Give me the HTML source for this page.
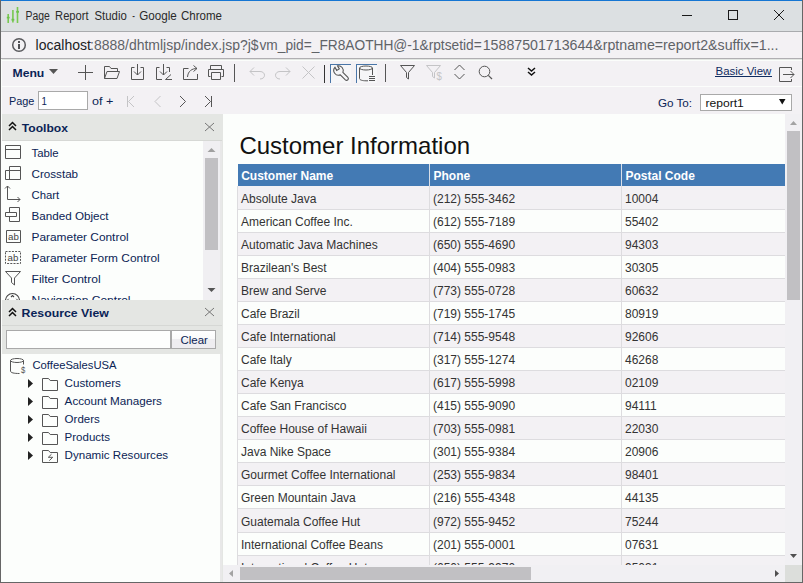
<!DOCTYPE html>
<html><head><meta charset="utf-8"><style>
html,body{margin:0;padding:0;width:803px;height:583px;overflow:hidden;background:#f3f1f4}
svg{display:block;font-family:"Liberation Sans",sans-serif}
</style></head><body>
<svg width="803" height="583" viewBox="0 0 803 583">
<defs>
<clipPath id="ctb"><rect x="1" y="141" width="202" height="159"/></clipPath>
<clipPath id="crep"><rect x="223" y="114" width="562" height="451"/></clipPath>
</defs>
<rect x="0" y="0" width="803" height="583" fill="#f3f1f4" />
<rect x="1" y="1" width="801" height="30" fill="#dce0e2" />
<rect x="1" y="31" width="801" height="1" fill="#a9abae" />
<rect x="1" y="32" width="801" height="26" fill="#f3f1f4" />
<rect x="1" y="58" width="801" height="1" fill="#b0aeb2" />
<rect x="1" y="59" width="801" height="1" fill="#e2e6e2" />
<rect x="1" y="60" width="801" height="1" fill="#fbfdfb" />
<path d="M8.2 14 V23 M12.9 10 V22.5 M17.5 7 V23" stroke="#78c850" stroke-width="1.6" fill="none" />
<rect x="6.8" y="16.8" width="2.8" height="1.6" fill="#6cc24a" />
<rect x="11.5" y="18.8" width="2.8" height="1.8" fill="#6cc24a" />
<rect x="16.2" y="10.9" width="2.8" height="1.8" fill="#6cc24a" />
<text x="25.50" y="20" font-size="12.5" fill="#2a2a2a" textLength="24.35" lengthAdjust="spacingAndGlyphs" >Page</text>
<text x="55.10" y="20" font-size="12.5" fill="#2a2a2a" textLength="33.47" lengthAdjust="spacingAndGlyphs" >Report</text>
<text x="94.50" y="20" font-size="12.5" fill="#2a2a2a" textLength="32.25" lengthAdjust="spacingAndGlyphs" >Studio</text>
<text x="132.30" y="20" font-size="12.5" fill="#2a2a2a" textLength="2.66" lengthAdjust="spacingAndGlyphs" >-</text>
<text x="139.20" y="20" font-size="12.5" fill="#2a2a2a" textLength="37.55" lengthAdjust="spacingAndGlyphs" >Google</text>
<text x="181.00" y="20" font-size="12.5" fill="#2a2a2a" textLength="40.95" lengthAdjust="spacingAndGlyphs" >Chrome</text>
<rect x="682" y="15" width="10" height="1" fill="#1a1a1a" />
<rect x="728.5" y="10.5" width="9" height="9" fill="none" stroke="#1a1a1a" stroke-width="1"/>
<path d="M774 10 L784 20 M784 10 L774 20" stroke="#1a1a1a" stroke-width="1" fill="none" />
<circle cx="19" cy="45" r="6.3" fill="none" stroke="#5a5a5e" stroke-width="1.5"/>
<rect x="18" y="44" width="2" height="5" fill="#505054" />
<rect x="18" y="41" width="2" height="2" fill="#505054" />
<text x="35.60" y="50" font-size="14" fill="#202124" textLength="55.29" lengthAdjust="spacingAndGlyphs" >localhost</text>
<text x="90.10" y="50" font-size="14" fill="#5f6368" textLength="168.49" lengthAdjust="spacingAndGlyphs" >:8888/dhtmljsp/index.jsp?j$</text>
<text x="259.50" y="50" font-size="14" fill="#5f6368" textLength="222.18" lengthAdjust="spacingAndGlyphs" >vm_pid=_FR8AOTHH@-1&amp;rptsetid=</text>
<text x="482.70" y="50" font-size="14" fill="#5f6368" textLength="295.79" lengthAdjust="spacingAndGlyphs" >15887501713644&amp;rptname=report2&amp;suffix=1...</text>
<text x="12.50" y="77" font-size="11.5" fill="#0a2356" font-weight="bold" textLength="31.82" lengthAdjust="spacingAndGlyphs" >Menu</text>
<path d="M49 69 H58 L53.5 74 Z" stroke="none" stroke-width="1" fill="#555" />
<path d="M78 72.5 H93 M85.5 65 V80" stroke="#555" stroke-width="1" fill="none" />
<path d="M104.5 78.5 V66.5 H109.5 L111 68.5 H117.5 V71.5 M104.5 78.5 L107 71.5 H119.5 L117 78.5 Z" stroke="#555" stroke-width="1" fill="none" />
<path d="M134.5 67.5 H131.5 V79.5 H143.5 V67.5 H140.5 M137.5 64 V75 M134 71.5 L137.5 75 L141 71.5" stroke="#555" stroke-width="1" fill="none" />
<path d="M159.5 67.5 H156.5 V79.5 H162 M166.5 67.5 H169.5 V72 M163.5 64 V75 M160 71.5 L163.5 75 L167 71.5 M165.5 79.5 H172 M165.5 79.5 L171 74.5" stroke="#555" stroke-width="1" fill="none" />
<path d="M188.5 68.5 H183.5 V79.5 H197.5 V74 M187.5 77 C188 71 192 68.5 197 68.5 M193.5 65.5 L197 68.5 L193.5 71.5" stroke="#555" stroke-width="1" fill="none" />
<path d="M210.5 69.5 V65.5 H221.5 V69.5 M210.5 76.5 H208.5 V69.5 H223.5 V76.5 H221.5 M211.5 72.5 H220.5 V79.5 H211.5 Z" stroke="#555" stroke-width="1" fill="none" />
<rect x="234" y="64" width="1" height="18" fill="#555" />
<path d="M250 71.5 H260 C266 71.5 266 79 260 79 M254 67.5 L250 71.5 L254 75.5" stroke="#c4c4c6" stroke-width="1" fill="none" />
<path d="M290 71.5 H280 C274 71.5 274 79 280 79 M286 67.5 L290 71.5 L286 75.5" stroke="#c4c4c6" stroke-width="1" fill="none" />
<path d="M302.5 66.5 L314.5 78.5 M314.5 66.5 L302.5 78.5" stroke="#c4c4c6" stroke-width="1" fill="none" />
<rect x="324" y="65" width="1" height="18" fill="#333" />
<rect x="330" y="64" width="21" height="19" fill="#f6f6f8" />
<rect x="330" y="64" width="21" height="1" fill="#4a76a8" />
<rect x="330" y="64" width="1" height="19" fill="#4a76a8" />
<path d="M342.88 72.34 L347.9 77.36 A1.8 1.8 0 0 1 345.36 79.9 L340.34 74.88 A4.8 4.8 0 0 1 334.93 67.31 L336.7 70.38 L339.3 68.88 L337.52 65.81 A4.8 4.8 0 0 1 342.88 72.34 Z" stroke="#555" stroke-width="1.1" fill="none" />
<rect x="356" y="64" width="21" height="19" fill="#f6f6f8" />
<rect x="356" y="64" width="21" height="1" fill="#4a76a8" />
<rect x="356" y="64" width="1" height="19" fill="#4a76a8" />
<ellipse cx="366" cy="68" rx="6.5" ry="2" fill="none" stroke="#555" stroke-width="1"/>
<path d="M359.5 68 V78.5 C359.5 80 362.5 80.8 366 80.8 H368 M372.5 68 V75" stroke="#555" stroke-width="1" fill="none" />
<rect x="369" y="76" width="6" height="1" fill="#555" />
<rect x="369" y="78" width="6" height="1" fill="#555" />
<rect x="369" y="80" width="6" height="1" fill="#555" />
<rect x="385" y="64" width="1" height="18" fill="#555" />
<path d="M400.5 65.5 H414.5 L408.5 72.5 V79 L406.5 77.5 V72.5 Z" stroke="#555" stroke-width="1" fill="none" />
<path d="M426.5 65.5 H440.5 L434.5 72.5 V78 L432.5 76.5 V72.5 Z" stroke="#c4c4c6" stroke-width="1" fill="none" />
<text x="436.50" y="79.5" font-size="10.5" fill="#c4c4c6" textLength="5.34" lengthAdjust="spacingAndGlyphs" >$</text>
<path d="M454.5 70 L459.5 65 L464.5 70 M454.5 74 L459.5 79 L464.5 74" stroke="#555" stroke-width="1" fill="none" />
<circle cx="484.5" cy="71.5" r="5.3" fill="none" stroke="#555" stroke-width="1"/>
<path d="M488.3 75.3 L492 79" stroke="#555" stroke-width="1.2" fill="none" />
<path d="M528 68 L531.5 71 L535 68 M528 72 L531.5 75 L535 72" stroke="#111" stroke-width="1.5" fill="none" />
<text x="715.50" y="74.7" font-size="11.5" fill="#0f2c60" textLength="55.80" lengthAdjust="spacingAndGlyphs" >Basic View</text>
<rect x="715" y="76" width="57" height="1" fill="#0f2c60" />
<path d="M791.5 67.5 H779.5 V81.5 H791.5 M791.5 67.5 V70 M791.5 79 V81.5 M783 74.5 H794 M790.5 71 L794 74.5 L790.5 78" stroke="#555" stroke-width="1" fill="none" />
<rect x="1" y="86" width="801" height="1" fill="#fbfdfb" />
<rect x="1" y="59" width="1" height="55" fill="#fbfdfb" />
<text x="9.00" y="104.6" font-size="11.5" fill="#0b2455" textLength="25.40" lengthAdjust="spacingAndGlyphs" >Page</text>
<rect x="38" y="91" width="50" height="19" fill="#a9a9a9" />
<rect x="39" y="92" width="48" height="17" fill="#ffffff" />
<text x="41.50" y="104.6" font-size="11.5" fill="#0b2455" textLength="5.40" lengthAdjust="spacingAndGlyphs" >1</text>
<text x="92.00" y="104.6" font-size="11.5" fill="#0b2455" textLength="21.32" lengthAdjust="spacingAndGlyphs" >of +</text>
<path d="M127.5 96 V107 M134 96 L128.5 101.5 L134 107" stroke="#c4c4c6" stroke-width="1" fill="none" />
<path d="M160.5 96 L155 101.5 L160.5 107" stroke="#c4c4c6" stroke-width="1" fill="none" />
<path d="M180 96 L185.5 101.5 L180 107" stroke="#555" stroke-width="1" fill="none" />
<path d="M211.5 96 V107 M205 96 L210.5 101.5 L205 107" stroke="#555" stroke-width="1" fill="none" />
<text x="657.90" y="106.8" font-size="11.5" fill="#0b2455" textLength="34.10" lengthAdjust="spacingAndGlyphs" >Go To:</text>
<rect x="700" y="94" width="92" height="17" fill="#a9a9a9" />
<rect x="701" y="95" width="90" height="15" fill="#ffffff" />
<text x="705.40" y="106.8" font-size="11.5" fill="#111" textLength="38.40" lengthAdjust="spacingAndGlyphs" >report1</text>
<path d="M779 99 H785.5 L782.25 104.5 Z" stroke="none" stroke-width="1" fill="#111" />
<rect x="1" y="114" width="222" height="469" fill="#fcfefc" />
<rect x="2" y="114" width="221" height="26" fill="#e4e6e3" />
<rect x="2" y="140" width="221" height="1" fill="#d6d8d5" />
<path d="M9 126 L12.5 122.5 L16 126 M9 130 L12.5 126.5 L16 130" stroke="#111" stroke-width="1.5" fill="none" />
<text x="21.80" y="132" font-size="11.5" fill="#0a2356" font-weight="bold" textLength="46.10" lengthAdjust="spacingAndGlyphs" >Toolbox</text>
<path d="M205 123 L214 131 M214 123 L205 131" stroke="#777" stroke-width="1" fill="none" />
<rect x="203" y="141" width="17" height="159" fill="#f0eff2" />
<rect x="205" y="158" width="13" height="92" fill="#c1c0c3" />
<path d="M207.5 152 H215.5 L211.5 148 Z" stroke="none" stroke-width="1" fill="#a0a0a0" />
<path d="M207.5 288 H215.5 L211.5 292 Z" stroke="none" stroke-width="1" fill="#555" />
<rect x="220" y="141" width="3" height="159" fill="#e8e8e8" />
<g clip-path="url(#ctb)">
<text x="31.50" y="157" font-size="11.5" fill="#0b2455" textLength="27.20" lengthAdjust="spacingAndGlyphs" >Table</text>
<text x="31.50" y="178" font-size="11.5" fill="#0b2455" textLength="46.60" lengthAdjust="spacingAndGlyphs" >Crosstab</text>
<text x="31.50" y="199" font-size="11.5" fill="#0b2455" textLength="27.70" lengthAdjust="spacingAndGlyphs" >Chart</text>
<text x="31.50" y="220" font-size="11.5" fill="#0b2455" textLength="77.10" lengthAdjust="spacingAndGlyphs" >Banded Object</text>
<text x="31.50" y="241" font-size="11.5" fill="#0b2455" textLength="97.15" lengthAdjust="spacingAndGlyphs" >Parameter Control</text>
<text x="31.50" y="262" font-size="11.5" fill="#0b2455" textLength="128.15" lengthAdjust="spacingAndGlyphs" >Parameter Form Control</text>
<text x="31.50" y="283" font-size="11.5" fill="#0b2455" textLength="69.15" lengthAdjust="spacingAndGlyphs" >Filter Control</text>
<text x="31.50" y="304" font-size="11.5" fill="#0b2455" textLength="99.05" lengthAdjust="spacingAndGlyphs" >Navigation Control</text>
<path d="M5.5 145.5 H20.5 V158.5 H5.5 Z M5.5 149.5 H20.5" stroke="#555" stroke-width="1" fill="none" />
<path d="M9.5 166.5 H20.5 V179.5 H5.5 V170.5 H20.5 M9.5 166.5 V179.5" stroke="#555" stroke-width="1" fill="none" />
<path d="M7.5 186 V199.5 H20 M5 188.5 L7.5 186 L10 188.5 M17.5 197 L20 199.5 L17.5 202" stroke="#555" stroke-width="1" fill="none" />
<path d="M9.5 207.5 H19.5 V221.5 H9.5 Z M5.5 212.5 H16.5 V216.5 H5.5 Z" stroke="#555" stroke-width="1" fill="none" />
<rect x="6" y="213" width="10" height="3" fill="#fcfefc" />
<path d="M6.5 230.5 H20.5 V242.5 H6.5 Z" stroke="#555" stroke-width="1" fill="none" />
<text x="8.00" y="240" font-size="9.5" fill="#444" textLength="10.78" lengthAdjust="spacingAndGlyphs" >ab</text>
<path d="M5.5 251.5 H20.5 V263.5 H5.5 Z" stroke="#555" stroke-width="1" fill="none" stroke-dasharray="2 1.2"/>
<text x="7.50" y="261" font-size="9.5" fill="#444" textLength="10.78" lengthAdjust="spacingAndGlyphs" >ab</text>
<path d="M5.5 271.5 H20.5 L14.5 278 V285 L11.5 282.5 V278 Z" stroke="#555" stroke-width="1" fill="none" />
<path d="M5.5 300.5 A7 7 0 0 1 19.5 300.5" stroke="#444" stroke-width="1.1" fill="none" />
<path d="M11 297 L12.5 295.5 L14 297" stroke="#444" stroke-width="1.1" fill="none" />
<path d="M7.5 300 L8.7 298.8 M17.5 300 L16.3 298.8" stroke="#444" stroke-width="1" fill="none" />
</g>
<rect x="2" y="300" width="221" height="25" fill="#e4e6e3" />
<rect x="2" y="325" width="221" height="1" fill="#d6d8d5" />
<path d="M9 312 L12.5 308.5 L16 312 M9 316 L12.5 312.5 L16 316" stroke="#111" stroke-width="1.5" fill="none" />
<text x="21.60" y="316.6" font-size="11.5" fill="#0a2356" font-weight="bold" textLength="87.25" lengthAdjust="spacingAndGlyphs" >Resource View</text>
<path d="M205 308 L214 316 M214 308 L205 316" stroke="#777" stroke-width="1" fill="none" />
<rect x="2" y="326" width="221" height="28" fill="#e4e6e3" />
<rect x="6" y="330" width="165" height="19" fill="#a9a9a9" />
<rect x="7" y="331" width="163" height="17" fill="#fdfefd" />
<rect x="171" y="330" width="45" height="19" fill="#a9a9a9" />
<defs><linearGradient id="bg1" x1="0" y1="0" x2="0" y2="1"><stop offset="0" stop-color="#ffffff"/><stop offset="0.5" stop-color="#fafafa"/><stop offset="0.5" stop-color="#eeedf0"/><stop offset="1" stop-color="#eeedf0"/></linearGradient></defs>
<rect x="172" y="331" width="43" height="17" fill="url(#bg1)" />
<text x="180.50" y="343.5" font-size="11.5" fill="#0b2455" textLength="27.33" lengthAdjust="spacingAndGlyphs" >Clear</text>
<rect x="220" y="354" width="3" height="229" fill="#e8e8e8" />
<ellipse cx="17" cy="360.5" rx="6.5" ry="2" fill="none" stroke="#555" stroke-width="1"/>
<path d="M10.5 360.5 V371 C10.5 372.8 14 373.5 19.5 373.5 M23.5 360.5 V364.5" stroke="#555" stroke-width="1" fill="none" />
<text x="21.00" y="373" font-size="9.5" fill="#555" textLength="4.28" lengthAdjust="spacingAndGlyphs" >$</text>
<text x="32.50" y="369.2" font-size="11.5" fill="#0b2455" textLength="84.07" lengthAdjust="spacingAndGlyphs" >CoffeeSalesUSA</text>
<text x="64.60" y="386.7" font-size="11.5" fill="#0b2455" textLength="56.35" lengthAdjust="spacingAndGlyphs" >Customers</text>
<path d="M28 379.0 L33 383.5 L28 388.0 Z" stroke="none" stroke-width="1" fill="#222" />
<path d="M42.5 390.5 V378.5 H48.5 L50.2 380.5 H57.5 V390.5 Z" stroke="#555" stroke-width="1" fill="none" />
<text x="64.60" y="404.7" font-size="11.5" fill="#0b2455" textLength="97.35" lengthAdjust="spacingAndGlyphs" >Account Managers</text>
<path d="M28 397.0 L33 401.5 L28 406.0 Z" stroke="none" stroke-width="1" fill="#222" />
<path d="M42.5 408.5 V396.5 H48.5 L50.2 398.5 H57.5 V408.5 Z" stroke="#555" stroke-width="1" fill="none" />
<text x="64.60" y="422.7" font-size="11.5" fill="#0b2455" textLength="35.25" lengthAdjust="spacingAndGlyphs" >Orders</text>
<path d="M28 415.0 L33 419.5 L28 424.0 Z" stroke="none" stroke-width="1" fill="#222" />
<path d="M42.5 426.5 V414.5 H48.5 L50.2 416.5 H57.5 V426.5 Z" stroke="#555" stroke-width="1" fill="none" />
<text x="64.60" y="440.7" font-size="11.5" fill="#0b2455" textLength="45.45" lengthAdjust="spacingAndGlyphs" >Products</text>
<path d="M28 433.0 L33 437.5 L28 442.0 Z" stroke="none" stroke-width="1" fill="#222" />
<path d="M42.5 444.5 V432.5 H48.5 L50.2 434.5 H57.5 V444.5 Z" stroke="#555" stroke-width="1" fill="none" />
<text x="64.60" y="458.7" font-size="11.5" fill="#0b2455" textLength="103.55" lengthAdjust="spacingAndGlyphs" >Dynamic Resources</text>
<path d="M28 451.0 L33 455.5 L28 460.0 Z" stroke="none" stroke-width="1" fill="#222" />
<path d="M42.5 462.5 V450.5 H48.5 L50.2 452.5 H57.5 V462.5 Z" stroke="#555" stroke-width="1" fill="none" />
<path d="M51.5 454.2 L48.3 457.3 H52.7 L49.3 460.6" stroke="#555" stroke-width="1" fill="none" />
<rect x="223" y="114" width="562" height="451" fill="#fcfefc" />
<g clip-path="url(#crep)">
<text x="239.40" y="153.9" font-size="24" fill="#111" >Customer Information</text>
<rect x="238" y="164" width="547" height="22" fill="#437ab4" />
<rect x="429" y="164" width="1" height="22" fill="#d9dfe8" />
<rect x="621" y="164" width="1" height="22" fill="#d9dfe8" />
<text x="241.20" y="179.8" font-size="12" fill="#ffffff" font-weight="bold" >Customer Name</text>
<text x="433.50" y="179.8" font-size="12" fill="#ffffff" font-weight="bold" >Phone</text>
<text x="625.50" y="179.8" font-size="12" fill="#ffffff" font-weight="bold" >Postal Code</text>
<rect x="237" y="186" width="548" height="24" fill="#f3f1f4" />
<rect x="237" y="209" width="548" height="1" fill="#dddcdf" />
<rect x="237" y="186" width="1" height="24" fill="#dddcdf" />
<rect x="429" y="186" width="1" height="24" fill="#dddcdf" />
<rect x="621" y="186" width="1" height="24" fill="#dddcdf" />
<text x="241.00" y="202.8" font-size="12" fill="#333" >Absolute Java</text>
<text x="433.00" y="202.8" font-size="12" fill="#333" >(212) 555-3462</text>
<text x="625.00" y="202.8" font-size="12" fill="#333" >10004</text>
<rect x="237" y="210" width="548" height="23" fill="#fcfefc" />
<rect x="237" y="232" width="548" height="1" fill="#dddcdf" />
<rect x="237" y="210" width="1" height="23" fill="#dddcdf" />
<rect x="429" y="210" width="1" height="23" fill="#dddcdf" />
<rect x="621" y="210" width="1" height="23" fill="#dddcdf" />
<text x="241.00" y="225.8" font-size="12" fill="#333" >American Coffee Inc.</text>
<text x="433.00" y="225.8" font-size="12" fill="#333" >(612) 555-7189</text>
<text x="625.00" y="225.8" font-size="12" fill="#333" >55402</text>
<rect x="237" y="233" width="548" height="23" fill="#f3f1f4" />
<rect x="237" y="255" width="548" height="1" fill="#dddcdf" />
<rect x="237" y="233" width="1" height="23" fill="#dddcdf" />
<rect x="429" y="233" width="1" height="23" fill="#dddcdf" />
<rect x="621" y="233" width="1" height="23" fill="#dddcdf" />
<text x="241.00" y="248.8" font-size="12" fill="#333" >Automatic Java Machines</text>
<text x="433.00" y="248.8" font-size="12" fill="#333" >(650) 555-4690</text>
<text x="625.00" y="248.8" font-size="12" fill="#333" >94303</text>
<rect x="237" y="256" width="548" height="23" fill="#fcfefc" />
<rect x="237" y="278" width="548" height="1" fill="#dddcdf" />
<rect x="237" y="256" width="1" height="23" fill="#dddcdf" />
<rect x="429" y="256" width="1" height="23" fill="#dddcdf" />
<rect x="621" y="256" width="1" height="23" fill="#dddcdf" />
<text x="241.00" y="271.8" font-size="12" fill="#333" >Brazilean's Best</text>
<text x="433.00" y="271.8" font-size="12" fill="#333" >(404) 555-0983</text>
<text x="625.00" y="271.8" font-size="12" fill="#333" >30305</text>
<rect x="237" y="279" width="548" height="23" fill="#f3f1f4" />
<rect x="237" y="301" width="548" height="1" fill="#dddcdf" />
<rect x="237" y="279" width="1" height="23" fill="#dddcdf" />
<rect x="429" y="279" width="1" height="23" fill="#dddcdf" />
<rect x="621" y="279" width="1" height="23" fill="#dddcdf" />
<text x="241.00" y="294.8" font-size="12" fill="#333" >Brew and Serve</text>
<text x="433.00" y="294.8" font-size="12" fill="#333" >(773) 555-0728</text>
<text x="625.00" y="294.8" font-size="12" fill="#333" >60632</text>
<rect x="237" y="302" width="548" height="23" fill="#fcfefc" />
<rect x="237" y="324" width="548" height="1" fill="#dddcdf" />
<rect x="237" y="302" width="1" height="23" fill="#dddcdf" />
<rect x="429" y="302" width="1" height="23" fill="#dddcdf" />
<rect x="621" y="302" width="1" height="23" fill="#dddcdf" />
<text x="241.00" y="317.8" font-size="12" fill="#333" >Cafe Brazil</text>
<text x="433.00" y="317.8" font-size="12" fill="#333" >(719) 555-1745</text>
<text x="625.00" y="317.8" font-size="12" fill="#333" >80919</text>
<rect x="237" y="325" width="548" height="23" fill="#f3f1f4" />
<rect x="237" y="347" width="548" height="1" fill="#dddcdf" />
<rect x="237" y="325" width="1" height="23" fill="#dddcdf" />
<rect x="429" y="325" width="1" height="23" fill="#dddcdf" />
<rect x="621" y="325" width="1" height="23" fill="#dddcdf" />
<text x="241.00" y="340.8" font-size="12" fill="#333" >Cafe International</text>
<text x="433.00" y="340.8" font-size="12" fill="#333" >(714) 555-9548</text>
<text x="625.00" y="340.8" font-size="12" fill="#333" >92606</text>
<rect x="237" y="348" width="548" height="23" fill="#fcfefc" />
<rect x="237" y="370" width="548" height="1" fill="#dddcdf" />
<rect x="237" y="348" width="1" height="23" fill="#dddcdf" />
<rect x="429" y="348" width="1" height="23" fill="#dddcdf" />
<rect x="621" y="348" width="1" height="23" fill="#dddcdf" />
<text x="241.00" y="363.8" font-size="12" fill="#333" >Cafe Italy</text>
<text x="433.00" y="363.8" font-size="12" fill="#333" >(317) 555-1274</text>
<text x="625.00" y="363.8" font-size="12" fill="#333" >46268</text>
<rect x="237" y="371" width="548" height="23" fill="#f3f1f4" />
<rect x="237" y="393" width="548" height="1" fill="#dddcdf" />
<rect x="237" y="371" width="1" height="23" fill="#dddcdf" />
<rect x="429" y="371" width="1" height="23" fill="#dddcdf" />
<rect x="621" y="371" width="1" height="23" fill="#dddcdf" />
<text x="241.00" y="386.8" font-size="12" fill="#333" >Cafe Kenya</text>
<text x="433.00" y="386.8" font-size="12" fill="#333" >(617) 555-5998</text>
<text x="625.00" y="386.8" font-size="12" fill="#333" >02109</text>
<rect x="237" y="394" width="548" height="23" fill="#fcfefc" />
<rect x="237" y="416" width="548" height="1" fill="#dddcdf" />
<rect x="237" y="394" width="1" height="23" fill="#dddcdf" />
<rect x="429" y="394" width="1" height="23" fill="#dddcdf" />
<rect x="621" y="394" width="1" height="23" fill="#dddcdf" />
<text x="241.00" y="409.8" font-size="12" fill="#333" >Cafe San Francisco</text>
<text x="433.00" y="409.8" font-size="12" fill="#333" >(415) 555-9090</text>
<text x="625.00" y="409.8" font-size="12" fill="#333" >94111</text>
<rect x="237" y="417" width="548" height="23" fill="#f3f1f4" />
<rect x="237" y="439" width="548" height="1" fill="#dddcdf" />
<rect x="237" y="417" width="1" height="23" fill="#dddcdf" />
<rect x="429" y="417" width="1" height="23" fill="#dddcdf" />
<rect x="621" y="417" width="1" height="23" fill="#dddcdf" />
<text x="241.00" y="432.8" font-size="12" fill="#333" >Coffee House of Hawaii</text>
<text x="433.00" y="432.8" font-size="12" fill="#333" >(703) 555-0981</text>
<text x="625.00" y="432.8" font-size="12" fill="#333" >22030</text>
<rect x="237" y="440" width="548" height="23" fill="#fcfefc" />
<rect x="237" y="462" width="548" height="1" fill="#dddcdf" />
<rect x="237" y="440" width="1" height="23" fill="#dddcdf" />
<rect x="429" y="440" width="1" height="23" fill="#dddcdf" />
<rect x="621" y="440" width="1" height="23" fill="#dddcdf" />
<text x="241.00" y="455.8" font-size="12" fill="#333" >Java Nike Space</text>
<text x="433.00" y="455.8" font-size="12" fill="#333" >(301) 555-9384</text>
<text x="625.00" y="455.8" font-size="12" fill="#333" >20906</text>
<rect x="237" y="463" width="548" height="23" fill="#f3f1f4" />
<rect x="237" y="485" width="548" height="1" fill="#dddcdf" />
<rect x="237" y="463" width="1" height="23" fill="#dddcdf" />
<rect x="429" y="463" width="1" height="23" fill="#dddcdf" />
<rect x="621" y="463" width="1" height="23" fill="#dddcdf" />
<text x="241.00" y="478.8" font-size="12" fill="#333" >Gourmet Coffee International</text>
<text x="433.00" y="478.8" font-size="12" fill="#333" >(253) 555-9834</text>
<text x="625.00" y="478.8" font-size="12" fill="#333" >98401</text>
<rect x="237" y="486" width="548" height="23" fill="#fcfefc" />
<rect x="237" y="508" width="548" height="1" fill="#dddcdf" />
<rect x="237" y="486" width="1" height="23" fill="#dddcdf" />
<rect x="429" y="486" width="1" height="23" fill="#dddcdf" />
<rect x="621" y="486" width="1" height="23" fill="#dddcdf" />
<text x="241.00" y="501.8" font-size="12" fill="#333" >Green Mountain Java</text>
<text x="433.00" y="501.8" font-size="12" fill="#333" >(216) 555-4348</text>
<text x="625.00" y="501.8" font-size="12" fill="#333" >44135</text>
<rect x="237" y="509" width="548" height="24" fill="#f3f1f4" />
<rect x="237" y="532" width="548" height="1" fill="#dddcdf" />
<rect x="237" y="509" width="1" height="24" fill="#dddcdf" />
<rect x="429" y="509" width="1" height="24" fill="#dddcdf" />
<rect x="621" y="509" width="1" height="24" fill="#dddcdf" />
<text x="241.00" y="525.8" font-size="12" fill="#333" >Guatemala Coffee Hut</text>
<text x="433.00" y="525.8" font-size="12" fill="#333" >(972) 555-9452</text>
<text x="625.00" y="525.8" font-size="12" fill="#333" >75244</text>
<rect x="237" y="533" width="548" height="23" fill="#fcfefc" />
<rect x="237" y="555" width="548" height="1" fill="#dddcdf" />
<rect x="237" y="533" width="1" height="23" fill="#dddcdf" />
<rect x="429" y="533" width="1" height="23" fill="#dddcdf" />
<rect x="621" y="533" width="1" height="23" fill="#dddcdf" />
<text x="241.00" y="548.8" font-size="12" fill="#333" >International Coffee Beans</text>
<text x="433.00" y="548.8" font-size="12" fill="#333" >(201) 555-0001</text>
<text x="625.00" y="548.8" font-size="12" fill="#333" >07631</text>
<rect x="237" y="556" width="548" height="23" fill="#f3f1f4" />
<rect x="237" y="578" width="548" height="1" fill="#dddcdf" />
<rect x="237" y="556" width="1" height="23" fill="#dddcdf" />
<rect x="429" y="556" width="1" height="23" fill="#dddcdf" />
<rect x="621" y="556" width="1" height="23" fill="#dddcdf" />
<text x="241.00" y="571.8" font-size="12" fill="#333" >International Coffee Hut</text>
<text x="433.00" y="571.8" font-size="12" fill="#333" >(650) 555-9970</text>
<text x="625.00" y="571.8" font-size="12" fill="#333" >95031</text>
</g>
<rect x="785" y="114" width="17" height="451" fill="#f1f0f3" />
<rect x="787" y="131" width="13" height="169" fill="#c1c0c3" />
<path d="M790 125 H797 L793.5 121 Z" stroke="none" stroke-width="1" fill="#a3a3a3" />
<path d="M790 554 H797 L793.5 558 Z" stroke="none" stroke-width="1" fill="#505050" />
<rect x="223" y="565" width="562" height="17" fill="#f1f0f3" />
<rect x="240" y="567" width="291" height="13" fill="#c1c0c3" />
<path d="M233 570 V577 L229 573.5 Z" stroke="none" stroke-width="1" fill="#a3a3a3" />
<path d="M775 570 V577 L779 573.5 Z" stroke="none" stroke-width="1" fill="#505050" />
<rect x="785" y="565" width="17" height="17" fill="#dcdedb" />
<rect x="222" y="114" width="1" height="469" fill="#e4e6e3" />
<rect x="0" y="0" width="803" height="1" fill="#1676d3" />
<rect x="0" y="0" width="1" height="583" fill="#666" />
<rect x="802" y="0" width="1" height="583" fill="#666" />
<rect x="0" y="582" width="803" height="1" fill="#666" />
</svg>
</body></html>
